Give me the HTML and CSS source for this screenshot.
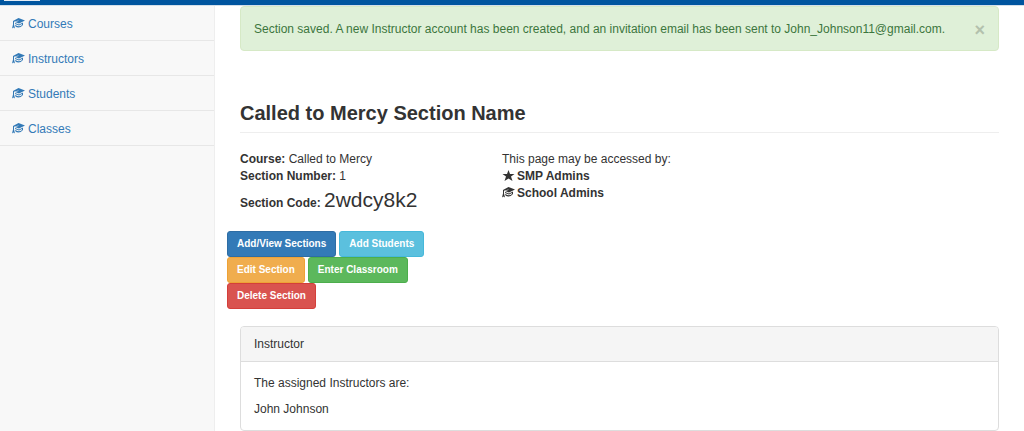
FILE: index.html
```
<!DOCTYPE html>
<html lang="en">
<head>
  <meta charset="utf-8">
  <title>Called to Mercy Section Name</title>
  <link rel="stylesheet" href="styles.css">
</head>
<body>
  <svg class="symbols" aria-hidden="true">
    <symbol id="grad-cap" viewBox="0 0 26 22">
      <path d="M13 0 L26 5 L14 11 L6 8 L13 6 L13 5 L5 7 L4 8 L4 13 L6 21 L3 19 L0 21 L2 13 L2 6 Z"/>
      <path d="M6 10 L14 13 L22 9 L22 14 Q14 23 6 16 L7 14 Q14 19 20 14 L20 12 L14 15 L6 12 Z"/>
    </symbol>
    <symbol id="star" viewBox="0 0 24 22">
      <path d="M12 0 L15 8 L24 8 L17 13 L20 22 L12 17 L4 22 L7 13 L0 8 L9 8 Z"/>
    </symbol>
  </svg>

  <header class="navbar">
    <div class="navbar-logo"></div>
  </header>

  <div class="wrapper">
    <nav class="sidebar">
      <ul class="side-menu">
        <li><a href="#"><svg class="icon"><use href="#grad-cap"/></svg>Courses</a></li>
        <li><a href="#"><svg class="icon"><use href="#grad-cap"/></svg>Instructors</a></li>
        <li><a href="#"><svg class="icon"><use href="#grad-cap"/></svg>Students</a></li>
        <li><a href="#"><svg class="icon"><use href="#grad-cap"/></svg>Classes</a></li>
      </ul>
    </nav>

    <main class="page">
      <div class="alert" role="alert">
        <span>Section saved. A new Instructor account has been created, and an invitation email has been sent to John_Johnson11@gmail.com.</span>
        <button type="button" class="close" aria-label="Close">×</button>
      </div>

      <h1 class="page-header">Called to Mercy Section Name</h1>

      <div class="row">
        <div class="details">
          <div><strong>Course:</strong> Called to Mercy</div>
          <div><strong>Section Number:</strong> 1</div>
          <div class="code-line"><strong>Section Code:</strong> <span class="code">2wdcy8k2</span></div>
        </div>
        <div class="access">
          <div>This page may be accessed by:</div>
          <div><svg class="icon"><use href="#star"/></svg><strong>SMP Admins</strong></div>
          <div><svg class="icon"><use href="#grad-cap"/></svg><strong>School Admins</strong></div>
        </div>
      </div>

      <div class="actions">
        <button type="button" class="btn btn-primary">Add/View Sections</button>
        <button type="button" class="btn btn-info">Add Students</button>
        <button type="button" class="btn btn-warning">Edit Section</button>
        <button type="button" class="btn btn-success">Enter Classroom</button>
        <button type="button" class="btn btn-danger">Delete Section</button>
      </div>

      <section class="panel">
        <div class="panel-heading">Instructor</div>
        <div class="panel-body">
          <p>The assigned Instructors are:</p>
          <p>John Johnson</p>
        </div>
      </section>
    </main>
  </div>
</body>
</html>
```

FILE: styles.css
```
* {
  box-sizing: border-box;
}

body {
  margin: 0;
  min-height: 100vh;
  display: flex;
  flex-direction: column;
  font-family: "Liberation Sans", Arial, sans-serif;
  font-size: 12px;
  line-height: 17px;
  color: #333;
  background: #fff;
}

.symbols {
  display: none;
}

.navbar {
  height: 6px;
  padding-left: 4px;
  background: #00559f;
  border-bottom: 1px solid #d3dfea;
}

.navbar-logo {
  width: 36px;
  height: 1px;
  background: #e4ecf4;
}

.wrapper {
  display: flex;
  flex: 1;
}

.sidebar {
  width: 215px;
  background: #f8f8f8;
  border-right: 1px solid #eee;
}

.side-menu {
  list-style: none;
  margin: 0;
  padding: 0;
}

.side-menu li {
  border-bottom: 1px solid #e7e7e7;
}

.side-menu a {
  display: block;
  padding: 10px 12px 7px;
  color: #337ab7;
  text-decoration: none;
}

.icon {
  width: 13px;
  height: 11px;
  margin-right: 3px;
  vertical-align: -1px;
  fill: currentColor;
}

.access .icon {
  margin-right: 2px;
}

.page {
  flex: 1;
  padding: 0 25px;
}

.alert {
  display: flex;
  justify-content: space-between;
  padding: 14px 13px 12px;
  color: #3c763d;
  background: #dff0d8;
  border: 1px solid #d6e9c6;
  border-radius: 4px;
}

.close {
  padding: 1px 0 0;
  border: 0;
  background: none;
  font-family: inherit;
  font-size: 18px;
  font-weight: bold;
  line-height: 16px;
  color: #b3c1ad;
  cursor: pointer;
}

.page-header {
  margin: 50px 0 18px;
  padding-bottom: 7px;
  font-size: 20px;
  line-height: 24px;
  border-bottom: 1px solid #eee;
}

.row {
  display: grid;
  grid-template-columns: 262px 1fr;
}

.code-line {
  line-height: 30px;
}

.code {
  font-size: 21px;
}

.actions {
  width: 208px;
  margin: 13px 0 17px -13px;
  display: flex;
  flex-wrap: wrap;
  column-gap: 3px;
}

.btn {
  padding: 4px 9px;
  border: 1px solid;
  border-radius: 3px;
  font-family: inherit;
  font-size: 10px;
  font-weight: bold;
  line-height: 16px;
  color: #fff;
  cursor: pointer;
}

.btn-primary {
  background: #337ab7;
  border-color: #2e6da4;
}

.btn-info {
  background: #5bc0de;
  border-color: #46b8da;
}

.btn-warning {
  background: #f0ad4e;
  border-color: #eea236;
}

.btn-success {
  background: #5cb85c;
  border-color: #4cae4c;
}

.btn-danger {
  background: #d9534f;
  border-color: #d43f3a;
}

.panel {
  border: 1px solid #ddd;
  border-radius: 4px;
}

.panel-heading {
  padding: 9px 13px 8px;
  background: #f5f5f5;
  border-bottom: 1px solid #ddd;
  border-radius: 3px 3px 0 0;
}

.panel-body {
  padding: 13px 13px 12px;
}

.panel-body p {
  margin: 0 0 9px;
}

.panel-body p:last-child {
  margin-bottom: 0;
}
```
